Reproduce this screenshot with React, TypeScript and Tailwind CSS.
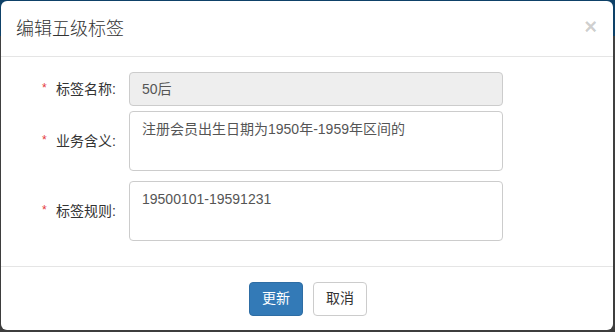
const fields = [
  { label: "标签名称:", value: "50后", kind: "input" },
  { label: "业务含义:", value: "注册会员出生日期为1950年-1959年区间的", kind: "area" },
  { label: "标签规则:", value: "19500101-19591231", kind: "area" },
];

export default function App() {
  return (
    <div
      className="w-[615px] h-[332px] overflow-hidden pl-px pt-px bg-[linear-gradient(to_bottom,#0e4168_0,#0e4168_36px,#414141_36px,#3d3d3d_100%)]"
      style={{ fontFamily: '"Liberation Sans", "Noto Sans CJK SC", sans-serif' }}
    >
      <div className="w-[612px] h-[329px] bg-white rounded-md flex flex-col text-[#333]">
        {/* Header */}
        <div className="h-[56px] border-b border-[#e5e5e5] flex items-center justify-between pl-[15px] pr-[16px]">
          <h4 className="text-[18px] leading-[26px] font-light text-[#333]">编辑五级标签</h4>
          <span className="text-[22px] font-bold leading-none text-black/20 -mt-[3px]">×</span>
        </div>

        {/* Body */}
        <div className="flex-1 pt-[15px]">
          {fields.map((f, i) => (
            <div
              key={f.label}
              className={
                "flex items-center " + (i === 0 ? "mb-[5px]" : i === 1 ? "mb-[10px]" : "")
              }
            >
              <span className="w-[55px] pl-[41px] text-[12px] text-[#e4393c] -mt-[3px]">*</span>
              <label className="w-[62px] text-[14px] text-[#333]">{f.label}</label>
              {f.kind === "input" ? (
                <div className="ml-[11px] w-[374px] h-[34px] px-[12px] flex items-center rounded bg-[#eeeeee] border border-[#cccccc] text-[14px] text-[#555]">
                  {f.value}
                </div>
              ) : (
                <div className="ml-[11px] w-[374px] h-[60px] px-[12px] pt-[7px] rounded bg-white border border-[#cccccc] text-[14px] leading-[20px] text-[#555]">
                  {f.value}
                </div>
              )}
            </div>
          ))}
        </div>

        {/* Footer */}
        <div className="h-[64px] border-t border-[#e5e5e5] flex items-center justify-center gap-[10px] pl-[2px]">
          <button className="h-[34px] px-[12px] rounded bg-[#337ab7] border border-[#2e6da4] text-white text-[14px]">
            更新
          </button>
          <button className="h-[34px] px-[12px] rounded bg-white border border-[#cccccc] text-[#333] text-[14px]">
            取消
          </button>
        </div>
      </div>
    </div>
  );
}
